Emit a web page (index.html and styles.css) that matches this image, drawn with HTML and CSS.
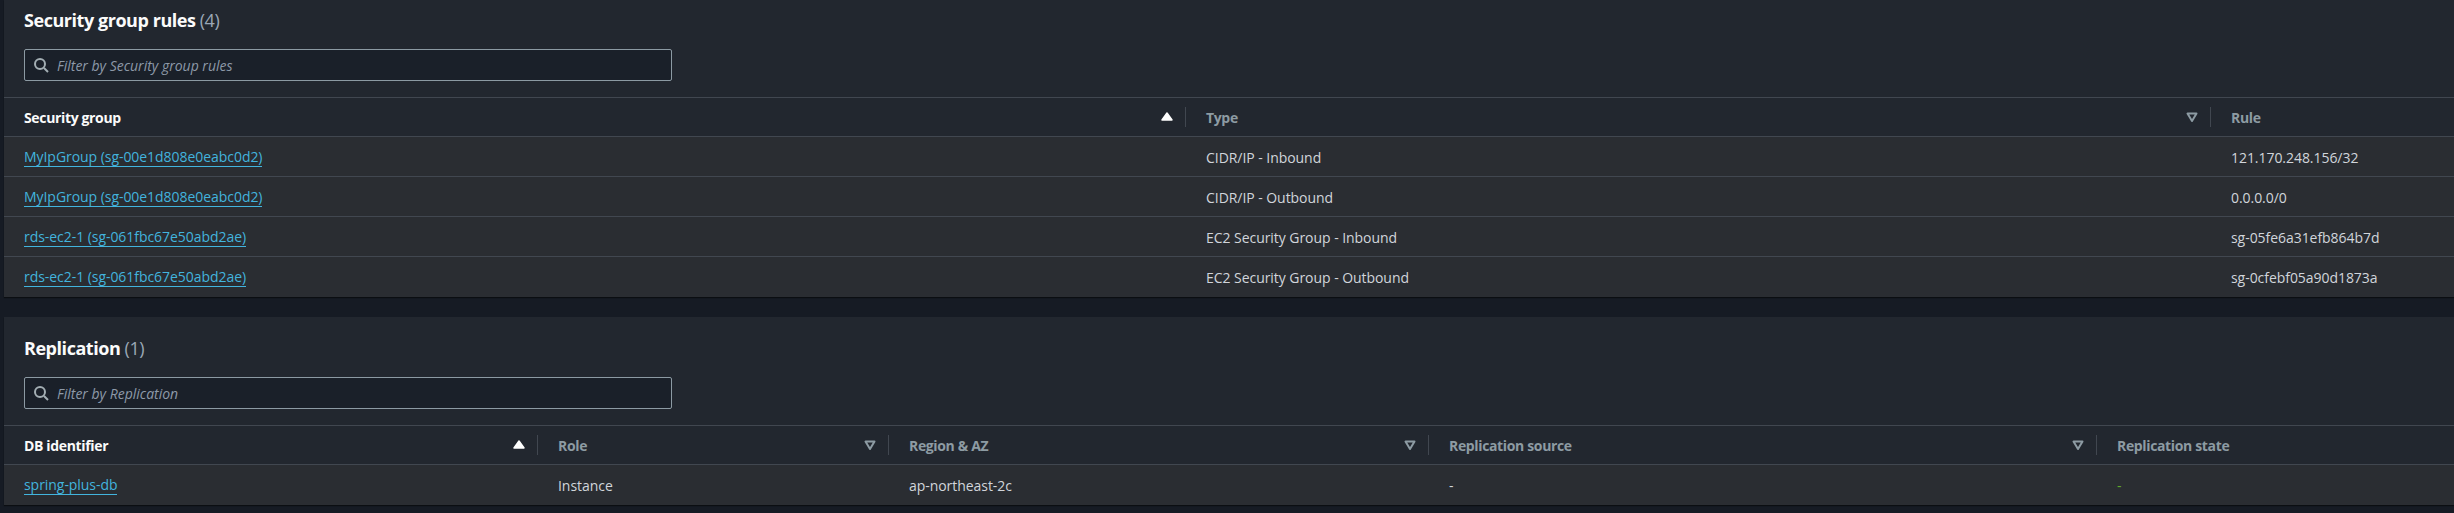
FILE: index.html
```html
<!DOCTYPE html>
<html lang="en">
<head>
<meta charset="utf-8">
<title>Security group rules and replication</title>
<link rel="stylesheet" href="styles.css">
</head>
<body>
<svg class="defs" width="0" height="0" aria-hidden="true">
  <symbol id="search" viewBox="0 0 16 16"><circle cx="7" cy="7" r="5" fill="none" stroke="currentColor" stroke-width="2"/><path d="M11 11l4 4" fill="none" stroke="currentColor" stroke-width="2"/></symbol>
  <symbol id="up" viewBox="0 0 16 16"><path d="M8 4l5 7H3z" fill="currentColor" stroke="currentColor" stroke-width="1.5" stroke-linejoin="round"/></symbol>
  <symbol id="down" viewBox="0 0 16 16"><path d="M3.5 4.5h9L8 12z" fill="none" stroke="currentColor" stroke-width="2" stroke-linejoin="round"/></symbol>
</svg>
<main class="page">
  <section class="panel rules">
    <h2 class="title">Security group rules <span class="count">(4)</span></h2>
    <div class="filter"><svg class="icon-search"><use href="#search"/></svg><span class="placeholder">Filter by Security group rules</span></div>
    <div class="table rules-table">
      <div class="th active"><span>Security group</span><svg class="sort"><use href="#up"/></svg></div>
      <div class="th"><span>Type</span><svg class="sort"><use href="#down"/></svg></div>
      <div class="th last"><span>Rule</span></div>

      <div class="td"><a href="#">MyIpGroup (sg-00e1d808e0eabc0d2)</a></div>
      <div class="td">CIDR/IP - Inbound</div>
      <div class="td last">121.170.248.156/32</div>

      <div class="td"><a href="#">MyIpGroup (sg-00e1d808e0eabc0d2)</a></div>
      <div class="td">CIDR/IP - Outbound</div>
      <div class="td last">0.0.0.0/0</div>

      <div class="td"><a href="#">rds-ec2-1 (sg-061fbc67e50abd2ae)</a></div>
      <div class="td">EC2 Security Group - Inbound</div>
      <div class="td last">sg-05fe6a31efb864b7d</div>

      <div class="td end"><a href="#">rds-ec2-1 (sg-061fbc67e50abd2ae)</a></div>
      <div class="td end">EC2 Security Group - Outbound</div>
      <div class="td end last">sg-0cfebf05a90d1873a</div>
    </div>
  </section>
  <section class="panel replication">
    <h2 class="title">Replication <span class="count">(1)</span></h2>
    <div class="filter"><svg class="icon-search"><use href="#search"/></svg><span class="placeholder">Filter by Replication</span></div>
    <div class="table replication-table">
      <div class="th active"><span>DB identifier</span><svg class="sort"><use href="#up"/></svg></div>
      <div class="th"><span>Role</span><svg class="sort"><use href="#down"/></svg></div>
      <div class="th"><span>Region &amp; AZ</span><svg class="sort"><use href="#down"/></svg></div>
      <div class="th"><span>Replication source</span><svg class="sort"><use href="#down"/></svg></div>
      <div class="th last"><span>Replication state</span></div>

      <div class="td end"><a href="#">spring-plus-db</a></div>
      <div class="td end">Instance</div>
      <div class="td end">ap-northeast-2c</div>
      <div class="td end">-</div>
      <div class="td end last state">-</div>
    </div>
  </section>
</main>
</body>
</html>
```
FILE: styles.css
```css
* { box-sizing: border-box; }
html, body { margin: 0; height: 100%; }
body {
  background: #161b24;
  overflow: hidden;
  font-family: "Open Sans", "Noto Sans", sans-serif;
  font-size: 14px;
  color: #d1d5db;
}
.defs { position: absolute; }
.page {
  margin-left: 4px;
  display: flex;
  flex-direction: column;
  gap: 20px;
}
.panel {
  background: #22272f;
  box-shadow: 0 1px 1px #0b0e12;
}
.rules { height: 297px; padding-top: 8px; }
.replication { height: 188px; padding-top: 19px; }
.title {
  margin: 0;
  padding-left: 20px;
  font-size: 18px;
  line-height: 24px;
  font-weight: 700;
  letter-spacing: -0.45px;
  color: #fbfbfb;
}
.count { font-weight: 400; color: #9ba7b6; }
.filter {
  margin: 17px 0 16px 20px;
  width: 648px;
  height: 32px;
  display: flex;
  align-items: center;
  gap: 8px;
  padding-left: 8px;
  background: #1a2029;
  border: 1px solid #8c9aa3;
  border-radius: 2px;
}
.icon-search { width: 16px; height: 16px; color: #a3aeb3; }
.placeholder { font-style: italic; color: #8d99a8; }
.table {
  display: grid;
  grid-template-rows: 39px;
  grid-auto-rows: 40px;
  border-top: 1px solid #414750;
}
.rules-table { grid-template-columns: 1182px 1025px 1fr; }
.replication-table { grid-template-columns: 534px 351px 540px 668px 1fr; }
.th, .td { display: flex; align-items: center; padding-left: 20px; }
.th {
  justify-content: space-between;
  padding-right: 11px;
  border-bottom: 1px solid #414750;
  font-weight: 700;
  letter-spacing: -0.35px;
  color: #8d9ba3;
  position: relative;
}
.th::after {
  content: "";
  position: absolute;
  right: 0;
  top: 9px;
  width: 1px;
  height: 20px;
  background: #414750;
}
.th.last::after { display: none; }
.th.active { color: #fbfbfb; }
.sort { width: 16px; height: 16px; color: #8d9ba3; }
.active .sort { color: #fff; }
.td {
  padding-top: 1px;
  background: #2a2d32;
  border-bottom: 1px solid #414750;
  color: #d1d5db;
  letter-spacing: -0.05px;
}
.td.end { border-bottom: 0; }
.td a { color: #42b4de; text-decoration: none; border-bottom: 1px solid #42b4de; line-height: 18px; }
.state { color: #5fa82a; }
```
